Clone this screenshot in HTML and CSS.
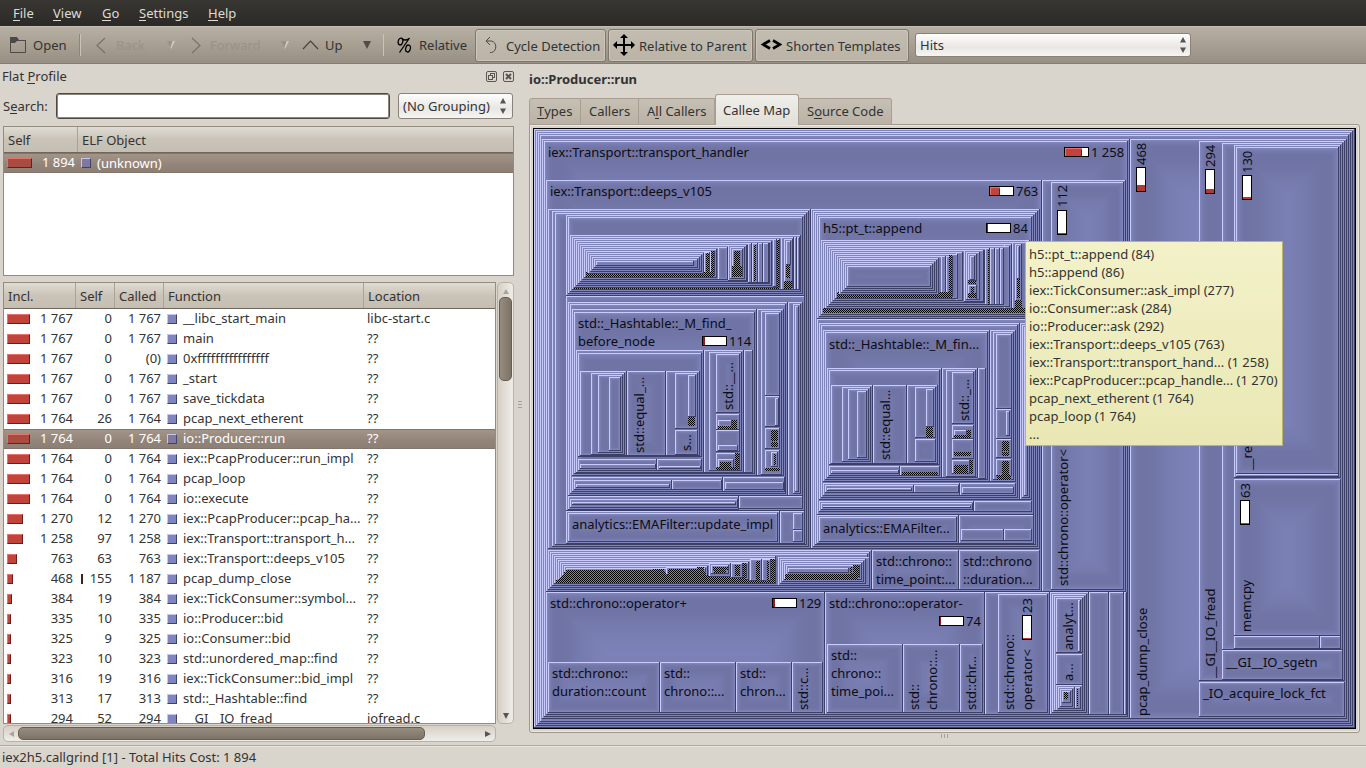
FILE: index.html
```html
<!DOCTYPE html>
<html lang="en">
<head>
<meta charset="utf-8">
<title>iex2h5.callgrind</title>
<link rel="stylesheet" href="styles.css">
</head>
<body>
<div class="window">
  <nav class="menubar">
    <span class="m-file"><u>F</u>ile</span><span class="m-view"><u>V</u>iew</span><span class="m-go"><u>G</u>o</span><span class="m-settings"><u>S</u>ettings</span><span class="m-help"><u>H</u>elp</span>
  </nav>
  <div class="toolbar">
    <div class="tool t-open"><svg width="17" height="17"><path d="M.5 1v14.500h15V3.500H7" fill="none" stroke="#4a4a48"/><path d="M0 0h7l2 3H16v1H7L5 6H0z" fill="#4a4a48"/></svg><span>Open</span></div>
    <div class="tool t-back off"><svg width="10" height="17"><path d="M9 1L1 8.500L9 16" class="chev"/></svg><span>Back</span><i class="tri"></i></div>
    <div class="tool t-fwd off"><svg width="10" height="17"><path d="M1 1l8 7.500L1 16" class="chev"/></svg><span>Forward</span><i class="tri"></i></div>
    <div class="tool t-up"><svg width="17" height="10"><path d="M1 9l7.500-8L16 9" class="chev"/></svg><span>Up</span><i class="tri"></i></div>
    <div class="tool t-rel"><svg width="15" height="16"><g fill="none" stroke="#000" stroke-width="1.300"><ellipse cx="3.500" cy="4.500" rx="2.300" ry="3.500" transform="rotate(15 3.500 4.500)"/><ellipse cx="11" cy="11.500" rx="2.300" ry="3.500" transform="rotate(15 11 11.500)"/><path d="M12.500 1L2.500 15.500M5 2.200q4 2 7.500-1"/></g></svg><span>Relative</span></div>
    <div class="tool pressed p1"><svg width="14" height="18"><path d="M1 5h5.500a6 6 0 010 11.500H5M5 1L1 5l4 4" fill="none" stroke="#4a4a48" stroke-width="1"/></svg><span>Cycle Detection</span></div>
    <div class="tool pressed p2"><svg width="22" height="22"><path d="M11 0l4 4h-3v6h6V7l4 4-4 4v-3h-6v6h3l-4 4-4-4h3v-6H4v3l-4-4 4-4v3h6V4H7z"/></svg><span>Relative to Parent</span></div>
    <div class="tool pressed p3"><svg width="21" height="12"><path d="M9 1.500L2 5.500l7 4M12 1.500l7 4-7 4" fill="none" stroke="#000" stroke-width="2.600"/></svg><span>Shorten Templates</span></div>
    <div class="combo hits"><span>Hits</span><svg width="6" height="16"><path d="M0 5.500L3 0l3 5.500zM0 10.500h6L3 16z" fill="#555"/></svg></div>
  </div>
  <div class="main">
    <section class="left">
      <div class="dock"><span>Flat <u>P</u>rofile</span>
        <svg width="28" height="12"><g fill="none" stroke="#5a5752"><rect x=".5" y=".5" width="10" height="10" rx="1.500"/><rect x="4.500" y="2.500" width="4" height="4"/><rect x="2.500" y="4.500" width="4" height="4" fill="#d9d4cc"/><rect x="17.500" y=".5" width="10" height="10" rx="1.500"/><path d="M20 3l5 5M25 3l-5 5" stroke-width="2"/></g></svg>
      </div>
      <div class="search"><label>S<u>e</u>arch:</label><div class="field"></div><div class="combo group"><span>(No Grouping)</span><svg width="6" height="16"><path d="M0 5.500L3 0l3 5.500zM0 10.500h6L3 16z" fill="#555"/></svg></div></div>
      <div class="objects">
        <div class="head"><b class="o1">Self</b><b class="o2">ELF Object</b></div>
        <div class="orow sel"><i class="bar" style="width:25px"></i><span class="onum">1 894</span><i class="sq"></i><span>(unknown)</span></div>
      </div>
      <div class="funcs">
        <div class="ftable">
          <div class="head"><b class="h1">Incl.</b><b class="h2">Self</b><b class="h3">Called</b><b class="h4">Function</b><b class="h5">Location</b></div>
          <div id="rows"></div>
        </div>
        <div class="vbar"><svg width="6" height="5"><path d="M0 5l3-5 3 5z" fill="#aaa49a"/></svg><div class="vthumb"></div><svg class="down" width="6" height="6"><path d="M0 0h6L3 6z" fill="#555"/></svg></div>
      </div>
      <div class="hbar"><svg width="5" height="6"><path d="M5 0v6L0 3z" fill="#aaa49a"/></svg><div class="hthumb"></div><svg class="rt" width="6" height="6"><path d="M0 0v6l6-3z" fill="#555"/></svg></div>
    </section>
    <div class="split"><i></i><i></i><i></i></div>
    <section class="right">
      <h1>io::Producer::run</h1>
      <div class="tabs"><span class="tb1"><u>T</u>ypes</span><span class="tb2">Callers</span><span class="tb3">A<u>l</u>l Callers</span><span class="tb4 on">Callee Map</span><span class="tb5">S<u>o</u>urce Code</span></div>
      <div class="pane">
        <svg id="map" class="map" width="823" height="601" viewBox="533 128 823 601"></svg>
        <div class="tip">h5::pt_t::append (84)<br>h5::append (86)<br>iex::TickConsumer::ask_impl (277)<br>io::Consumer::ask (284)<br>io::Producer::ask (292)<br>iex::Transport::deeps_v105 (763)<br>iex::Transport::transport_hand... (1 258)<br>iex::PcapProducer::pcap_handle... (1 270)<br>pcap_next_etherent (1 764)<br>pcap_loop (1 764)<br>...</div>
      </div>
      <div class="hsplit"><i></i><i></i><i></i></div>
    </section>
  </div>
  <footer>iex2h5.callgrind [1] - Total Hits Cost: 1 894</footer>
</div>
<script src="map.js"></script>
</body>
</html>
```

FILE: styles.css
```css
* { box-sizing: border-box; }
body { margin: 0; background: #d9d4cc; color: #333; font: 13px/18px "Noto Sans", sans-serif; }
.window { width: 1366px; height: 768px; display: flex; flex-direction: column; overflow: hidden; }
u { text-decoration: none; box-shadow: inset 0 -1px currentColor; display: inline-block; height: 17px; line-height: 18px; }
.menubar { height: 26px; background: linear-gradient(#373631, #2c2a28); color: #dfdbd2; display: flex; padding: 4px 0 0 13px; }
.m-file { width: 40px; } .m-view { width: 49px; } .m-go { width: 37px; } .m-settings { width: 69px; }
.toolbar { height: 38px; background: linear-gradient(#b6afa3, #a8a194 45%, #978f83); border-top: 1px solid #c3bdb2; border-bottom: 1px solid #857d72; display: flex; align-items: center; }
.tool { display: flex; align-items: center; height: 37px; white-space: nowrap; }
.chev { fill: none; stroke: #3f3f3d; stroke-width: 1.1; }
.tri { width: 8px; height: 8px; background: #504d49; clip-path: polygon(0 0, 100% 0, 50% 100%); }
.off { color: #9a9286; } .off .chev { stroke: #77716a; }
.off .tri { background: linear-gradient(110deg, #9a9286 50%, #d0cabf 55%); }
.t-open { width: 81px; padding-left: 10px; gap: 6px; height: 22px; border-right: 1px solid #c8c2b7; box-shadow: inset -1px 0 #8d867b; }
.t-back { width: 94px; padding-left: 15px; } .t-back span { width: 51px; margin-left: 10px; }
.t-fwd { width: 127px; padding-left: 16px; } .t-fwd span { width: 71px; margin-left: 9px; }
.t-up { width: 81px; } .t-up span { width: 38px; margin-left: 6px; }
.t-rel { width: 92px; padding-left: 13px; gap: 7px; height: 22px; border-left: 1px solid #c8c2b7; }
.pressed { height: 33px; border: 1px solid #7f776b; border-radius: 3px; background: linear-gradient(#c3bdb1, #bab3a6); box-shadow: inset 0 0 0 1px #cbc5ba; margin-right: 2px; }
.p1 { width: 131px; padding-left: 9px; } .p1 span { margin-left: 7px; }
.p2 { width: 145px; padding-left: 4px; } .p2 span { margin-left: 4px; }
.p3 { width: 154px; padding-left: 5px; } .p3 span { margin-left: 4px; }
.pressed span { margin-top: 2px; }
.combo { background: linear-gradient(#fdfdfc, #e9e7e3 60%, #f6f5f3); border: 1px solid #8a8277; border-radius: 3px; display: flex; align-items: center; justify-content: space-between; }
.hits { width: 276px; height: 24px; margin-left: 4px; padding: 0 4px 0 4px; }
.main { height: 681px; display: flex; }
.left { width: 514px; padding-left: 3px; }
.dock { height: 28px; padding-top: 3px; margin-left: -1px; display: flex; justify-content: space-between; }
.dock svg { margin-top: 4px; }
.search { height: 35px; display: flex; align-items: center; padding-bottom: 8px; }
.search label { width: 53px; }
.field { width: 334px; height: 26px; background: #fff; border: 1px solid #4f4842; box-shadow: inset 0 0 0 1px #8d857c; border-radius: 3px; }
.group { width: 115px; height: 26px; margin-left: 8px; padding: 0 6px 0 4px; }
.objects { width: 511px; height: 150px; border: 1px solid #958c80; background: #fff; margin-top: -1px; }
.head { height: 26px; display: flex; background: linear-gradient(#e0dcd4, #cac3b8 50%, #c5beb2); border-bottom: 1px solid #6f675c; }
.head b { font-weight: normal; padding: 4px 0 0 4px; border-right: 1px solid #aaa296; }
.o1 { width: 74px; } .head .o2 { border: 0; }
.h1 { width: 72px; } .h2 { width: 39px; } .h3 { width: 49px; } .h4 { width: 200px; } .head .h5 { border: 0; }
.orow { height: 20px; display: flex; align-items: center; padding-left: 3px; }
.onum { width: 43px; text-align: right; margin: -2px 6px 0 0; } .orow .sq { margin-right: 6px; }
.bar { height: 10px; background: #c0443c; border: 1px solid; border-color: #e8736b #6e1c18 #6e1c18 #e8736b; display: block; }
.sq { width: 10px; height: 10px; background: #8085be; border: 1px solid; border-color: #c4c7f2 #3f426a #3f426a #c4c7f2; display: block; }
.sel { background: linear-gradient(#a39488, #93847a 60%, #8e7f75); color: #fff; border-top: 1px solid #82756b; border-bottom: 1px solid #82756b; }
.sel .bar { background: #a94b40; } .sel .sq { background: #7f79a0; }
.funcs { display: flex; margin-top: 6px; height: 442px; }
.ftable { width: 493px; border: 1px solid #958c80; background: #fff; overflow: hidden; }
.frow { height: 20px; display: grid; grid-template-columns: 28px 38px 39px 49px 22px 184px 1fr; padding-left: 3px; align-items: center; white-space: nowrap; }
.frow > span { margin-top: -2px; }
.frow .n { text-align: right; } .frow .sq { margin-left: 6px; }
.mini { float: left; margin: 5px 0 0 8px; width: 2px; height: 10px; background: #3a2522; }
.vbar { width: 17px; margin-left: 1px; background: linear-gradient(90deg, #d6d0c6, #efede8); border: 1px solid #b8b1a6; border-radius: 5px; display: flex; flex-direction: column; align-items: center; padding-top: 6px; }
.vthumb { width: 13px; height: 84px; margin-top: 3px; border-radius: 5px; background: linear-gradient(90deg, #968d80, #7d7467); border: 1px solid #665e53; }
.down { margin-top: auto; margin-bottom: 4px; }
.hbar { width: 493px; height: 17px; margin-top: 1px; background: linear-gradient(#d6d0c6, #efede8); border: 1px solid #b8b1a6; border-radius: 5px; display: flex; align-items: center; padding: 0 4px 0 5px; }
.hthumb { width: 407px; height: 13px; margin-left: 4px; border-radius: 5px; background: linear-gradient(#968d80, #7d7467); border: 1px solid #665e53; }
.rt { margin-left: auto; }
.split { width: 15px; padding: 337px 0 0 4px; display: flex; flex-direction: column; gap: 2px; }
.split i { width: 4px; height: 1px; background: #aaa296; }
.right { width: 831px; }
h1 { font-size: 13px; line-height: 18px; margin: 0; padding-top: 6px; height: 30px; }
.tabs { height: 31px; display: flex; align-items: flex-end; position: relative; z-index: 1; }
.tabs span { height: 27px; background: linear-gradient(#c6bfb4, #bab2a5); border: 1px solid #a89f92; border-left-width: 0; padding: 3px 0 0 8px; white-space: nowrap; }
.tabs .tb1 { width: 52px; border-left-width: 1px; border-radius: 3px 0 0; padding-left: 7px; } .tb2 { width: 58px; } .tb3 { width: 76px; } .tb4 { width: 84px; } .tabs .tb5 { width: 93px; border-radius: 0 3px 0 0; }
.tabs .on { height: 31px; background: linear-gradient(#f0eeea, #e2dfd8); border-bottom: 0; padding-top: 6px; border-radius: 3px 3px 0 0; border-left-width: 1px; padding-left: 7px; }
.pane { position: relative; width: 831px; height: 609px; border: 1px solid #a0978b; border-radius: 0 3px 3px 3px; padding: 2px 3px; margin-top: -1px; box-shadow: inset 0 0 0 1px #ebe8e2; }
.map { display: block; margin-top: 1px; }
.map text { font: 13px "Noto Sans", sans-serif; fill: #0c0c14; white-space: pre; }
.tip { position: absolute; left: 495px; top: 116px; width: 258px; height: 205px; background: linear-gradient(#f3f1c8, #e9e8b4); border: 1px solid #b9b66b; padding: 3px 3px; color: #333; white-space: nowrap; }
.hsplit { display: flex; gap: 2px; padding: 1px 0 0 412px; }
.hsplit i { width: 1px; height: 4px; background: #aaa296; }
footer { height: 23px; border-top: 1px solid #b0a99d; box-shadow: inset 0 1px #e8e4dd; padding: 2px; }
```

FILE: map.js
```javascript
const rows = [
  [23,'1 767','0','1 767','__libc_start_main','libc-start.c'],[23,'1 767','0','1 767','main','??'],[23,'1 767','0','(0)','0xffffffffffffffff','??'],
  [23,'1 767','0','1 767','_start','??'],[23,'1 767','0','1 767','save_tickdata','??'],[23,'1 764','26','1 764','pcap_next_etherent','??'],
  [23,'1 764','0','1 764','io::Producer::run','??'],[23,'1 764','0','1 764','iex::PcapProducer::run_impl','??'],[23,'1 764','0','1 764','pcap_loop','??'],
  [23,'1 764','0','1 764','io::execute','??'],[16,'1 270','12','1 270','iex::PcapProducer::pcap_ha...','??'],[16,'1 258','97','1 258','iex::Transport::transport_h...','??'],
  [10,'763','63','763','iex::Transport::deeps_v105','??'],[6,'468','155','1 187','pcap_dump_close','??'],[5,'384','19','384','iex::TickConsumer::symbol...','??'],
  [4,'335','10','335','io::Producer::bid','??'],[4,'325','9','325','io::Consumer::bid','??'],[4,'323','10','323','std::unordered_map::find','??'],
  [4,'316','19','316','iex::TickConsumer::bid_impl','??'],[4,'313','17','313','std::_Hashtable::find','??'],[4,'294','52','294','__GI__IO_fread','iofread.c']
];
document.getElementById('rows').innerHTML = rows.map((r, i) =>
  `<div class="frow${i === 6 ? ' sel' : ''}"><i class="bar" style="width:${r[0]}px"></i><span class="n">${r[1]}</span><span class="n">${r[2] === '155' ? '<i class="mini"></i>' : ''}${r[2]}</span><span class="n">${r[3]}</span><i class="sq"></i><span>${r[4]}</span><span>${r[5]}</span></div>`).join('');

const out = [];
const rect = (x, y, w, h, f) => { if (w > 0 && h > 0) out.push(`<rect x="${x}" y="${y}" width="${w}" height="${h}" fill="${f}"/>`); };

// Raised box with inclusive pixel bounds; the face darkens near its edge and lightens towards the middle.
function box(x0, y0, x1, y1) {
  const W = x1 - x0 + 1, H = y1 - y0 + 1;
  rect(x0, y0, W, H, '#3d4066');
  rect(x0, y0, W - 1, 1, '#c8cbfb');
  rect(x0, y0, 1, H - 1, '#c8cbfb');
  let x = x0 + 1, y = y0 + 1, w = W - 2, h = H - 2, f = 0.1;
  let forth = 0.7, back1 = 0.9, back2 = 0.97;
  const s = Math.min(w, h);
  if (s < 100) { forth -= 0.3 * (100 - s) / 100; back1 -= 0.2 * (100 - s) / 100; back2 -= 0.02 * (100 - s) / 100; }
  const step = () => {
    rect(x, y, w, h, `rgb(${Math.round(129 - 18 * f)},${Math.round(134 - 19 * f)},${Math.round(190 - 27 * f)})`);
    x++; y++; w -= 2; h -= 2;
  };
  while (f < 0.95 && w > 0 && h > 0) { step(); f = 1 - (1 - f) * forth; }
  while (f > 0.7 && w > 0 && h > 0) { step(); f = 1 - (1 - f) / back1; }
  while (f > 0.01 && w > 0 && h > 0) { step(); f *= back2; }
}
const boxes = s => s.trim().split(/\s+/).forEach(b => box(...b.split(',').map(Number)));
const rings = (x0, y0, x1, y1, n) => { for (let i = 0; i < n; i++) box(x0 + 2 * i, y0 + 2 * i, x1 - 2 * i, y1 - 2 * i); };
const hatch = s => s.trim().split(/\s+/).forEach(b => { const [x0, y0, x1, y1] = b.split(',').map(Number); rect(x0, y0, x1 - x0 + 1, y1 - y0 + 1, 'url(#ht)'); });

rect(533, 128, 823, 601, '#000');
rings(534, 129, 1354, 727, 4);
boxes('542,139,1129,718 544,141,1127,716 1130,139,1346,718 1199,141,1344,680 1222,143,1342,649 1234,145,1340,477 1236,147,1338,473 1236,474,1338,476 1234,479,1340,635 1234,636,1319,648 1320,636,1340,648 1222,650,1342,679 1199,682,1344,716');
boxes('546,180,1041,591 1042,180,1125,591 1051,182,1123,589');

// deeps_v105, left block
boxes('548,209,810,548 552,211,808,546 555,213,806,544 566,215,804,295 568,217,802,293');
const peakL = [[800,291],[798,289],[779,287],[771,285],[769,283],[747,281],[727,279],[716,277],[714,275],[703,273],[701,271],[699,269],[697,267],[693,265]];
peakL.forEach(([r, b], i) => {
  box(570 + 2 * i, 235 + 2 * i, r, b);
  if (i === 1) { hatch('574,286,778,288'); boxes('781,237,793,289 784,239,792,287 786,241,790,264 794,237,796,289 797,237,799,289'); }
  if (i === 2) { boxes('773,239,776,286'); hatch('777,240,778,288 786,265,789,277 784,281,791,288'); }
  if (i === 4) { boxes('748,243,751,282 752,243,757,282 758,243,762,282 763,243,768,282'); hatch('754,245,755,280'); }
  if (i === 5) { boxes('728,245,746,280 730,247,744,278 732,249,742,276'); hatch('734,251,739,265 732,266,741,276'); }
  if (i === 6) boxes('718,247,727,279');
  if (i === 8) { boxes('704,252,709,273 710,252,714,273'); hatch('706,253,708,273 711,251,713,276 586,272,713,276'); }
});
boxes('566,296,804,510 568,302,787,495 570,304,785,493 572,309,756,475 574,312,754,473 757,309,783,475 761,311,781,474 765,313,779,395 765,396,779,426 775,398,778,425 765,428,779,448 765,450,779,468 771,452,777,466 788,302,802,495 793,304,800,493 795,306,798,491');
hatch('771,430,777,440 771,442,777,446 774,454,775,464 765,468,779,470');
boxes('572,477,722,491 574,480,671,489 576,484,669,487 672,480,721,489 723,477,784,491 725,482,783,489 568,496,738,509 570,499,737,507 572,502,735,504 739,496,802,508 566,511,779,543 568,513,777,541 780,511,804,543 793,513,802,529 793,530,802,541');
boxes('576,350,703,472 578,353,701,456 580,371,626,455 591,373,624,454 598,375,622,452 609,377,620,450 627,371,665,455 666,371,699,455 675,373,697,428 688,375,695,416 675,430,697,454 578,459,656,470 580,464,655,468 657,459,701,470 659,466,700,468');
boxes('704,350,743,472 709,352,741,470 716,354,739,412 716,414,739,429 718,420,731,426 716,430,739,451 718,445,737,450 716,453,739,469 718,459,733,467 744,350,752,472');
hatch('688,417,694,425 732,420,736,428 718,426,736,428 720,462,730,467 716,467,737,469 735,453,738,469');

// deeps_v105, right block
boxes('811,209,1039,548 813,211,1037,546 815,213,1035,544 817,215,1033,318 819,217,1031,316');
const peakR = [[1029,314],[1027,312],[1011,308],[1009,306],[999,304],[984,302],[962,300],[957,298],[952,296],[938,294],[936,292],[934,290],[932,288],[930,286]];
peakR.forEach(([r, b], i) => {
  box(821 + 2 * i, 240 + 2 * i, r, b);
  if (i === 1) { boxes('1012,242,1026,311 1015,244,1021,309 1017,246,1019,278'); hatch('823,308,1025,312 1017,279,1019,297 1015,300,1021,310'); }
  if (i === 2) boxes('1004,244,1011,308');
  if (i === 4) boxes('985,248,989,304 990,248,994,304 995,248,999,304 1000,248,1003,304');
  if (i === 5) { hatch('988,250,988,304'); boxes('964,250,983,301 966,252,979,299 968,254,976,280 970,256,974,279 968,285,976,299'); hatch('968,281,975,283 971,287,973,293 968,293,975,297'); }
  if (i === 6) boxes('956,252,962,300');
  if (i === 8) { boxes('941,256,945,294 946,256,951,294'); hatch('949,255,951,296 837,292,951,297'); }
});
boxes('817,319,1033,514 819,323,1019,499 821,325,1017,497 823,330,989,481 825,332,987,479 990,330,1015,481 993,332,1013,479 996,334,1011,408 996,409,1011,438 1006,411,1009,435 996,439,1011,457 996,459,1011,475 1020,323,1031,499 1022,325,1029,497 1024,327,1027,495');
hatch('1002,441,1008,450 1002,452,1008,455 1002,461,1008,474 997,475,1010,479');
boxes('823,483,959,495 825,485,913,492 827,488,911,490 914,485,958,492 960,483,1015,495 962,487,1013,493 819,501,973,511 821,503,972,509 823,506,970,507 974,501,1031,511 817,515,958,543 819,517,956,541 959,515,1033,543 961,529,1003,540 1004,529,1031,540');
boxes('827,368,941,477 829,370,939,464 831,385,872,463 842,387,870,461 848,389,868,459 857,391,866,457 873,385,906,463 907,385,937,463 915,387,935,437 926,389,933,426 915,439,935,461 829,466,899,475 831,470,898,473 900,466,939,475 942,368,977,477 946,370,975,476 952,372,973,423 952,425,973,438 954,430,966,436 952,439,973,458 952,460,969,473 978,368,985,478');
hatch('926,427,932,437 902,472,937,474 967,430,970,437 954,435,970,437 954,452,970,455 954,465,967,473 970,460,972,473');

// flat strip
rings(548, 550, 871, 589, 3);
[[775,583],[775,581],[750,581],[748,579],[746,577],[707,575],[705,573]].forEach(([r, b], i) => box(554 + 2 * i, 556 + 2 * i, r, b));
hatch('566,570,663,572 564,572,705,575 562,575,743,577 560,577,745,579 558,579,745,581 556,580,774,582 653,569,663,571');
boxes('666,567,697,574 709,563,730,576 711,565,728,573 731,563,742,577 750,559,761,580 762,559,770,580');
hatch('668,569,696,575 697,567,703,575 713,567,727,569 714,569,725,572 735,565,739,575 743,563,745,577 756,561,759,580 767,561,768,580 771,559,774,580');
boxes('778,557,869,585 780,559,865,583 782,561,863,581 784,563,861,579 786,565,859,577 788,568,848,572');
hatch('785,574,857,579 850,567,851,575 853,565,858,577');
boxes('872,550,958,589 959,550,1039,589');

// bottom row
boxes('546,592,824,714 548,662,659,712 660,662,735,712 736,662,791,712 792,662,822,712 825,592,984,714 827,644,902,712 903,644,959,712 960,644,982,712 985,592,1049,714 998,594,1047,712 1050,592,1088,714 1052,594,1086,712 1054,596,1084,710 1056,598,1082,652 1078,600,1080,651 1056,654,1082,684 1056,685,1082,710 1058,687,1074,708 1060,689,1072,706 1062,691,1070,702 1075,687,1080,708 1089,592,1108,714 1109,592,1123,714 1124,592,1126,714');
hatch('1064,692,1067,698 1077,688,1077,706');

const text = (x, y, s) => out.push(`<text x="${x}" y="${y}">${s.replace(/</g, '&lt;')}</text>`);
const vtext = (x, y, s) => out.push(`<text transform="translate(${x} ${y}) rotate(-90)">${s.replace(/</g, '&lt;')}</text>`);
[[548,157,'iex::Transport::transport_handler'],[1091,157,'1 258'],[550,196,'iex::Transport::deeps_v105'],[1016,196,'763'],[823,233,'h5::pt_t::append'],[1013,233,'84'],
 [578,328,'std::_Hashtable::_M_find_'],[578,346,'before_node'],[729,346,'114'],[829,349,'std::_Hashtable::_M_fin...'],[572,529,'analytics::EMAFilter::update_impl'],[823,533,'analytics::EMAFilter...'],
 [876,566,'std::chrono::'],[876,584,'time_point:...'],[963,566,'std::chrono'],[963,584,'::duration...'],[550,608,'std::chrono::operator+'],[799,608,'129'],[829,608,'std::chrono::operator-'],[966,626,'74'],
 [552,678,'std::chrono::'],[552,696,'duration::count'],[664,678,'std::'],[664,696,'chrono::...'],[740,678,'std::'],[740,696,'chron...'],
 [831,660,'std::'],[831,678,'chrono::'],[831,696,'time_poi...'],[1226,667,'__GI__IO_sgetn'],[1203,698,'_IO_acquire_lock_fct']].forEach(t => text(...t));
[[644,453,'std::equal_...'],[691,451,'s...'],[733,410,'std::__...'],[890,460,'std::equal...'],[969,421,'std::_...'],[1068,586,'std::chrono::operator<'],[1067,207,'112'],[1147,716,'pcap_dump_close'],[1146,165,'468'],
 [1215,678,'__GI__IO_fread'],[1215,167,'294'],[1252,173,'130'],[1251,632,'memcpy'],[1250,498,'63'],[1252,470,'__read'],[808,710,'std::c...'],[919,710,'std::'],[937,710,'chrono::...'],[976,710,'std::chr...'],[1014,710,'std::chrono::'],[1032,710,'operator<'],[1032,613,'23'],[1073,650,'analyt...'],[1073,681,'a...']].forEach(t => vtext(...t));

[[1064,147,17],[989,186,10],[986,223,1],[702,336,2],[772,598,2],[939,616,1]].forEach(([x, y, v]) => {
  rect(x, y, 25, 10, '#000'); rect(x + 1, y + 1, 23, 8, '#fff'); rect(x + 1, y + 1, v, 8, v > 2 ? '#c0443c' : '#8a221b');
  if (v > 2) { rect(x + 1, y + 1, v, 1, '#e8736b'); rect(x + 1, y + 1, 1, 8, '#e8736b'); rect(x + v, y + 3, 1, 6, '#6e1c18'); }
});
[[1136,167,6],[1205,169,4],[1242,175,2],[1057,210,1],[1240,500,1],[1022,615,1]].forEach(([x, y, v]) => {
  rect(x, y, 10, 25, '#000'); rect(x + 1, y + 1, 8, 23, '#fff'); rect(x + 1, y + 24 - v, 8, v, '#b03a32');
});
document.getElementById('map').innerHTML = '<defs><pattern id="ht" width="2" height="2" patternUnits="userSpaceOnUse"><rect width="2" height="2" fill="#8085be"/><rect width="1" height="1"/><rect x="1" y="1" width="1" height="1"/></pattern></defs><g shape-rendering="crispEdges">' + out.filter(s => s[1] === 'r').join('') + '</g>' + out.filter(s => s[1] === 't').join('');
```
